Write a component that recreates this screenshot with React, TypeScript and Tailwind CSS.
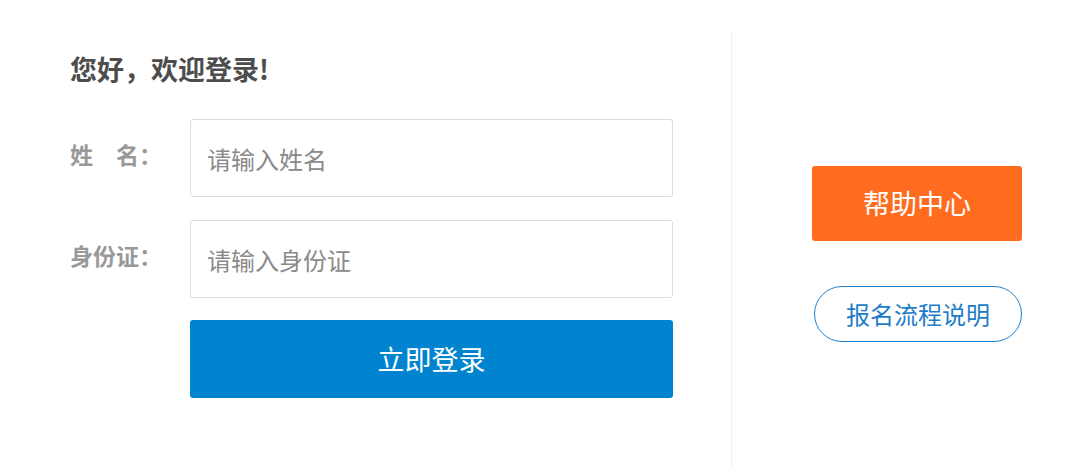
import React from "react";

const font = { fontFamily: '"Noto Sans CJK SC", "Noto Sans", sans-serif' };

export default function App() {
  return (
    <div className="w-[1065px] h-[467px] bg-white flex" style={font}>
      <div className="w-[731px] pl-[70px] pt-[49px]">
        <h1 className="text-[27px] leading-[39px] font-bold text-[#4d4d4d]">您好，欢迎登录!</h1>
        <div className="mt-[31px] flex flex-col">
          <div className="flex items-center">
            <label className="w-[120px] text-[23px] font-bold text-[#999] -mt-[8px]">姓　名：</label>
            <input
              className="w-[483px] h-[78px] border border-[#dcdcdc] rounded-[3px] pl-[16px] text-[24px] text-[#333] placeholder:text-[#8a8a8a] outline-none"
              placeholder="请输入姓名"
            />
          </div>
          <div className="flex items-center mt-[23px]">
            <label className="w-[120px] text-[23px] font-bold text-[#999] -mt-[8px]">身份证：</label>
            <input
              className="w-[483px] h-[78px] border border-[#dcdcdc] rounded-[3px] pl-[16px] text-[24px] text-[#333] placeholder:text-[#8a8a8a] outline-none"
              placeholder="请输入身份证"
            />
          </div>
          <div className="flex mt-[22px]">
            <div className="w-[120px]" />
            <button className="w-[483px] h-[78px] bg-[#0084cf] rounded-[3px] text-white text-[27px]">立即登录</button>
          </div>
        </div>
      </div>
      <div className="flex-1 mt-[31px] border-l border-[#f0f0f0] pl-[80px] pt-[135px]">
        <button className="w-[210px] h-[75px] bg-[#ff6c1f] rounded-[3px] text-white text-[27px]">帮助中心</button>
        <button className="mt-[45px] ml-[2px] w-[208px] h-[56px] border border-[#1d80cf] rounded-full text-[#1d7cc9] text-[24px] flex items-center justify-center">
          报名流程说明
        </button>
      </div>
    </div>
  );
}
